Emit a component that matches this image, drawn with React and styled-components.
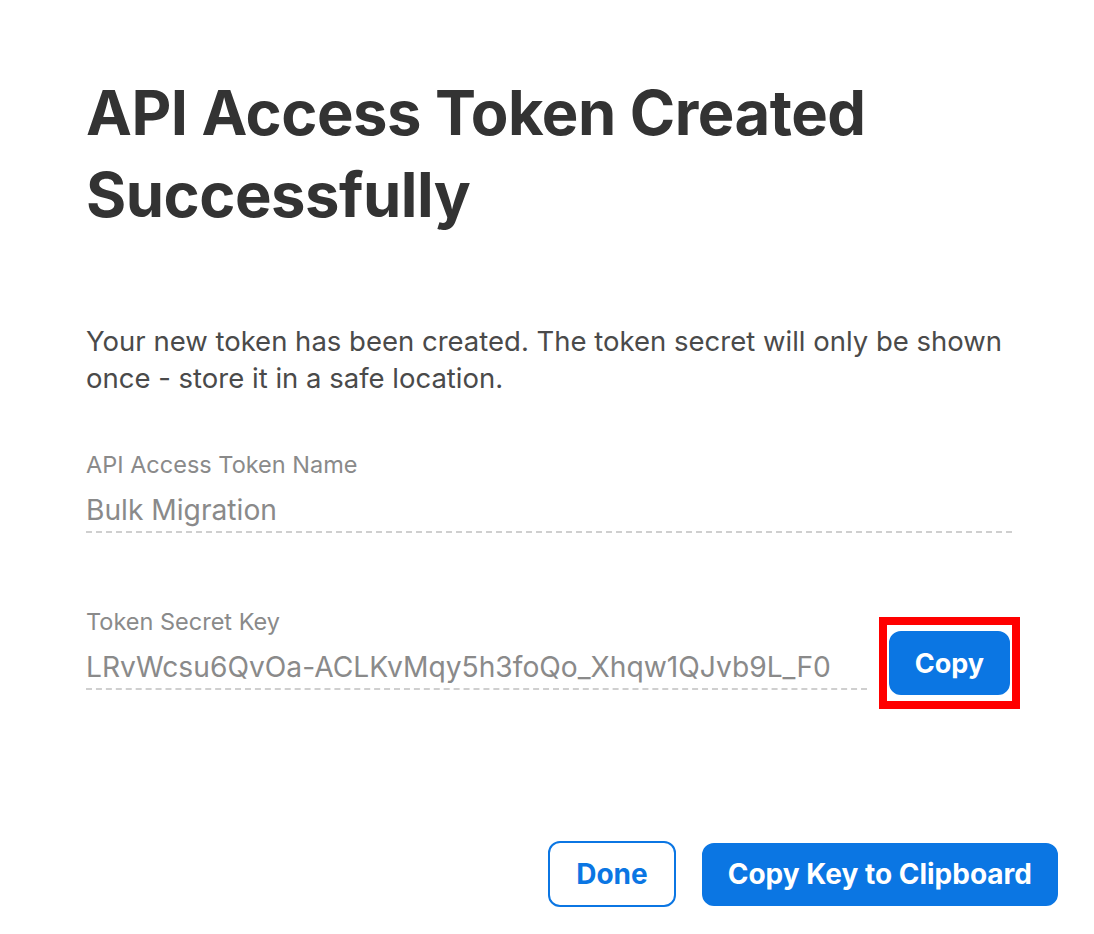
import React from 'react';
import styled, { createGlobalStyle } from 'styled-components';

const GlobalStyle = createGlobalStyle`
  html, body {
    margin: 0;
    padding: 0;
    background: #fff;
  }
  body {
    font-family: Inter, "Liberation Sans", Arial, sans-serif;
    -webkit-font-smoothing: antialiased;
  }
`;

const Dialog = styled.div`
  width: 1094px;
  height: 934px;
  box-sizing: border-box;
  padding: 72px 36px 0 86px;
  display: flex;
  flex-direction: column;
`;

const Title = styled.h1`
  margin: 0;
  font-size: 61.5px;
  line-height: 82px;
  font-weight: 700;
  color: #333;
  letter-spacing: -0.5px;
`;

const Description = styled.p`
  margin: 87px 30px 0 0;
  font-size: 27.5px;
  line-height: 37px;
  color: #4a4a4a;
`;

const Field = styled.div`
  display: flex;
  flex-direction: column;
  flex: ${p => (p.$grow ? 1 : 'none')};
`;

const Label = styled.label`
  font-size: 23.5px;
  line-height: 30px;
  color: #8a8a8a;
`;

const Value = styled.div`
  margin-top: 10px;
  font-size: 28.2px;
  line-height: 40px;
  color: #8a8a8a;
  padding-bottom: 1px;
  border-bottom: 2px dashed #cfcfcf;
  white-space: nowrap;
`;

const NameField = styled(Field)`
  margin-top: 53px;
  margin-right: 46px;
`;

const SecretRow = styled.div`
  display: flex;
  align-items: flex-start;
  margin-top: 74px;
  margin-right: 38px;
`;

const Highlight = styled.div`
  border: 8px solid #ff0000;
  padding: 6px 2px;
  margin: 10px 0 0 12px;
  display: flex;
`;

const Button = styled.button`
  font-family: inherit;
  font-weight: 700;
  font-size: ${p => p.$size || 28}px;
  border-radius: 12px;
  cursor: pointer;
  box-sizing: border-box;
  height: ${p => p.$height || 64}px;
  padding: 0 ${p => p.$pad || 24}px;
  border: 2px solid #0b76e3;
  background: ${p => (p.$outline ? '#fff' : '#0b76e3')};
  color: ${p => (p.$outline ? '#0b76e3' : '#fff')};
`;

const Footer = styled.div`
  display: flex;
  justify-content: flex-end;
  align-items: center;
  gap: 26px;
  margin-top: auto;
  margin-bottom: 27px;
`;

export default function App() {
  return (
    <>
      <GlobalStyle />
      <Dialog>
        <Title>
          API Access Token Created
          <br />
          Successfully
        </Title>
        <Description>
          Your new token has been created. The token secret will only be shown
          once - store it in a safe location.
        </Description>
        <NameField>
          <Label>API Access Token Name</Label>
          <Value>Bulk Migration</Value>
        </NameField>
        <SecretRow>
          <Field $grow>
            <Label>Token Secret Key</Label>
            <Value>LRvWcsu6QvOa-ACLKvMqy5h3foQo_Xhqw1QJvb9L_F0</Value>
          </Field>
          <Highlight>
            <Button $height={64} $pad={24} $size={27}>Copy</Button>
          </Highlight>
        </SecretRow>
        <Footer>
          <Button $outline $height={66} $pad={26}>Done</Button>
          <Button $height={63} $pad={24}>Copy Key to Clipboard</Button>
        </Footer>
      </Dialog>
    </>
  );
}
